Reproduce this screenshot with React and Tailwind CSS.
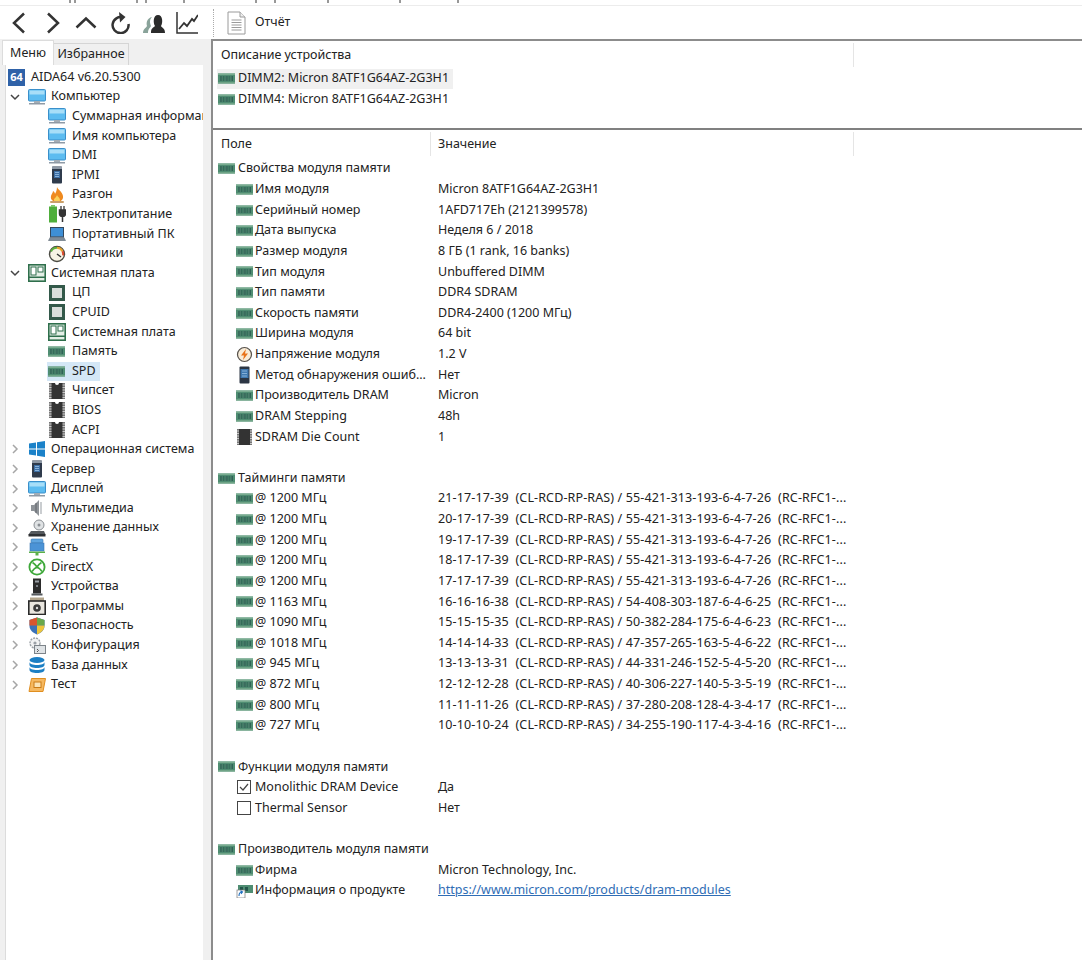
const FONT = "font-['Noto_Sans',sans-serif]";

function Ram({ className = 'w-[17px] h-[11px]' }) {
  return (
    <svg viewBox="0 0 17 11" className={className}>
      <rect x="0" y="0.5" width="17" height="10" fill="#4f8d72" />
      <rect x="0" y="0.5" width="17" height="1.5" fill="#79ab90" />
      <rect x="0" y="9" width="17" height="1.5" fill="#6fa386" />
      <rect x="2" y="3" width="3.6" height="5" fill="#23564a" />
      <rect x="6.7" y="3" width="3.6" height="5" fill="#23564a" />
      <rect x="11.4" y="3" width="3.6" height="5" fill="#23564a" />
      <path d="M3 3v5M4.400 3v5M7.700 3v5M9.100 3v5M12.400 3v5M13.800 3v5" stroke="#7fb094" strokeWidth="0.5" />
    </svg>
  );
}

function Monitor() {
  return (
    <svg viewBox="0 0 18 16" className="w-[18px] h-[16px]">
      <rect x="0.5" y="0.5" width="17" height="11.5" rx="1" fill="#5dbcf0" stroke="#3a8fca" />
      <rect x="1.5" y="1.5" width="15" height="4" fill="#a8def8" />
      <rect x="6" y="12" width="6" height="2" fill="#a3adb6" />
      <rect x="1" y="14" width="16" height="1.5" fill="#8f9aa5" />
    </svg>
  );
}

function Server() {
  return (
    <svg viewBox="0 0 18 18" className="w-[18px] h-[18px]">
      <rect x="4" y="0.5" width="10" height="17" rx="1" fill="#2f3b4c" />
      <rect x="4" y="0.5" width="10" height="2.5" fill="#8d98a5" />
      <rect x="6" y="5" width="6" height="7" fill="#3d6fa5" />
      <path d="M7 6.5h4M7 8.5h4M7 10.5h4" stroke="#9cc4e8" strokeWidth="0.8" />
    </svg>
  );
}

function Flame() {
  return (
    <svg viewBox="0 0 18 18" className="w-[18px] h-[18px]">
      <path d="M9 1c1 3 5 4 6 9 .6 4-3 6-6 6s-7-2-6-6c.4-2 2-3 2-5 1 .5 2 1.5 2 3 1-2 2-4 2-7z" fill="#ef8a1f" />
      <path d="M9 9c.5 2 3 2.5 3 5 0 1.5-1.5 2-3 2s-3-.5-3-2c0-2 2.5-2.500 3-5z" fill="#fbd15a" />
      <rect x="2" y="15" width="14" height="2" rx="1" fill="#c9a06a" />
    </svg>
  );
}

function Power() {
  return (
    <svg viewBox="0 0 18 18" className="w-[18px] h-[18px]">
      <rect x="1" y="1.5" width="8" height="16" fill="#4fae3c" />
      <rect x="3" y="0" width="4" height="2" fill="#7ec96c" />
      <path d="M13 1v4M16 1v4" stroke="#333" strokeWidth="1.3" />
      <path d="M11.500 5h6v3.500a3 3 0 0 1-6 0zM14.500 11v6" stroke="#333" strokeWidth="1.5" fill="#333" />
    </svg>
  );
}

function Laptop() {
  return (
    <svg viewBox="0 0 18 16" className="w-[18px] h-[16px]">
      <rect x="2.5" y="1.5" width="13" height="9.5" fill="#3e8fd6" stroke="#33475c" />
      <path d="M2.500 11h13l2 3.500H.5z" fill="#7d8b99" stroke="#5a6672" strokeWidth="0.6" />
    </svg>
  );
}

function Gauge() {
  return (
    <svg viewBox="0 0 18 18" className="w-[18px] h-[18px]">
      <circle cx="9" cy="9" r="7.5" fill="#f8f3e4" stroke="#4a4a42" strokeWidth="1.4" />
      <path d="M3 6.500A6.500 6.500 0 0 1 9 2.800" stroke="#5eae3e" strokeWidth="2" fill="none" />
      <path d="M9 2.800a6.500 6.500 0 0 1 5.500 3.500" stroke="#e7a52c" strokeWidth="2" fill="none" />
      <path d="M14.500 6.300a6.500 6.500 0 0 1 .6 4" stroke="#d9482c" strokeWidth="2" fill="none" />
      <path d="M9 9l4 3" stroke="#333" strokeWidth="1.4" />
    </svg>
  );
}

function Board() {
  return (
    <svg viewBox="0 0 18 18" className="w-[18px] h-[18px]">
      <rect x="0.8" y="0.8" width="16.4" height="16.4" fill="#e4efe6" stroke="#2f6f4c" strokeWidth="1.6" />
      <rect x="3" y="3" width="5" height="8" fill="#fff" stroke="#2f6f4c" />
      <rect x="10" y="3" width="5" height="5" fill="#fff" stroke="#2f6f4c" />
      <rect x="1" y="12.5" width="16" height="1.5" fill="#2f6f4c" />
    </svg>
  );
}

function Cpu() {
  return (
    <svg viewBox="0 0 18 18" className="w-[18px] h-[18px]">
      <rect x="1" y="1" width="16" height="16" fill="#33594a" />
      <rect x="4" y="4" width="10" height="10" fill="#d9dedb" />
    </svg>
  );
}

function Chip() {
  return (
    <svg viewBox="0 0 18 18" className="w-[18px] h-[18px]">
      <path d="M1 1h6a2 2 0 0 0 4 0h6v16H1z" fill="#777" />
      <rect x="3.5" y="1" width="11" height="16" fill="#333" />
      <path d="M7 1a2 2 0 0 0 4 0z" fill="#fff" />
      <path d="M1 3h16M1 5.500h16M1 8h16M1 10.500h16M1 13h16M1 15.500h16" stroke="#fff" strokeWidth="0.6" strokeDasharray="2.500 11 2.500" />
    </svg>
  );
}

function Windows() {
  return (
    <svg viewBox="0 0 18 18" className="w-[18px] h-[18px]">
      <path d="M1 3.500l7-1v6H1zM9 2.300l8-1.300v7.500H9zM1 9.500h7v6l-7-1zM9 9.500h8V17l-8-1.300z" fill="#1b82c9" />
    </svg>
  );
}

function Speaker() {
  return (
    <svg viewBox="0 0 18 18" className="w-[18px] h-[18px]">
      <path d="M3 6h3l5-5v16l-5-5H3z" fill="#8f9499" />
      <path d="M8 4v10" stroke="#60656a" />
      <path d="M13 3v12" stroke="#b9bdc1" strokeWidth="1.5" />
    </svg>
  );
}

function Storage() {
  return (
    <svg viewBox="0 0 18 18" className="w-[18px] h-[18px]">
      <circle cx="11" cy="6" r="5" fill="#dfe2e4" stroke="#8a8f94" />
      <circle cx="11" cy="6" r="1.5" fill="#8a8f94" />
      <path d="M3 12h13l1.500 3.500H.5z" fill="#55595d" />
      <rect x="0.5" y="15" width="17" height="2.5" fill="#2e3033" />
    </svg>
  );
}

function Network() {
  return (
    <svg viewBox="0 0 18 18" className="w-[18px] h-[18px]">
      <rect x="3" y="1" width="12" height="4" rx="1" fill="#5fa5e0" stroke="#3c78b4" strokeWidth="0.6" />
      <rect x="2" y="5" width="14" height="8" fill="#4b93d6" stroke="#3c78b4" strokeWidth="0.6" />
      <rect x="1" y="13.5" width="16" height="1.5" fill="#5bb04a" />
      <rect x="7.5" y="15" width="3" height="2.5" fill="#5bb04a" />
    </svg>
  );
}

function Xbox() {
  return (
    <svg viewBox="0 0 18 18" className="w-[18px] h-[18px]">
      <circle cx="9" cy="9" r="7.6" fill="#fff" stroke="#3ea83a" strokeWidth="1.8" />
      <path d="M4.500 4.500C7 6 8 7.500 9 9c1-1.500 2-3 4.500-4.500M4 13.500C5.500 11 7 10 9 9c2 1 3.500 2 5 4.500" stroke="#3ea83a" strokeWidth="1.7" fill="none" />
    </svg>
  );
}

function Device() {
  return (
    <svg viewBox="0 0 18 18" className="w-[18px] h-[18px]">
      <rect x="5" y="0.5" width="8" height="15" fill="#2b2b2b" />
      <rect x="7" y="2.5" width="4" height="2" fill="#9aa0a6" />
      <rect x="8" y="7" width="2" height="2" fill="#7b8086" />
      <rect x="3.5" y="15.5" width="11" height="2" fill="#55595d" />
    </svg>
  );
}

function Programs() {
  return (
    <svg viewBox="0 0 18 18" className="w-[18px] h-[18px]">
      <rect x="2" y="0.5" width="14" height="4" fill="#b3a58c" />
      <rect x="0.8" y="4" width="16.4" height="13.5" fill="#e9e6df" stroke="#2a2a2a" strokeWidth="1.6" />
      <circle cx="9" cy="11" r="3.8" fill="#3a3a3a" />
      <circle cx="9" cy="11" r="1.2" fill="#ddd" />
    </svg>
  );
}

function Shield() {
  return (
    <svg viewBox="0 0 18 18" className="w-[18px] h-[18px]">
      <path d="M9 .5l7.500 2.500v6c0 4-3.500 7-7.500 8.500C5 16 1.500 13 1.500 9V3z" fill="#3c72b8" />
      <path d="M9 .5v8H1.500V3z" fill="#d9562e" />
      <path d="M9 .5l7.500 2.500v5.500H9z" fill="#6aa84a" />
      <path d="M9 8.500h7.500c0 4-3.500 7.500-7.500 9z" fill="#efc53a" />
    </svg>
  );
}

function Config() {
  return (
    <svg viewBox="0 0 18 18" className="w-[18px] h-[18px]">
      <circle cx="7" cy="7" r="5" fill="#f1f2f3" stroke="#9aa0a6" strokeWidth="1.4" strokeDasharray="2 1" />
      <circle cx="7" cy="7" r="1.6" fill="#9aa0a6" />
      <rect x="6.5" y="9.5" width="11" height="8" fill="#dfe3e6" stroke="#7d848a" />
      <path d="M9 13l1.500 1.500L9 16" stroke="#555" fill="none" />
    </svg>
  );
}

function Database() {
  return (
    <svg viewBox="0 0 18 18" className="w-[18px] h-[18px]">
      <ellipse cx="9" cy="4" rx="7.5" ry="3" fill="#1c7fc4" />
      <path d="M1.500 6v3c0 1.700 3.400 3 7.500 3s7.500-1.300 7.500-3V6c0 1.700-3.400 3-7.500 3S1.500 7.700 1.500 6z" fill="#1c7fc4" />
      <path d="M1.500 11v3c0 1.700 3.400 3 7.500 3s7.500-1.300 7.500-3v-3c0 1.700-3.400 3-7.500 3s-7.500-1.300-7.500-3z" fill="#1c7fc4" />
    </svg>
  );
}

function TestIcon() {
  return (
    <svg viewBox="0 0 18 18" className="w-[18px] h-[18px]">
      <path d="M3.500 2.500h14l-2.500 13H1z" fill="#f5b860" stroke="#e08e1f" />
      <rect x="6" y="6" width="7" height="5.500" fill="#fbe3b4" stroke="#c97a14" />
    </svg>
  );
}

function Bolt() {
  return (
    <svg viewBox="0 0 17 17" className="w-[17px] h-[17px]">
      <circle cx="8.5" cy="8.5" r="7" fill="#f8ecd8" stroke="#55504a" strokeWidth="1.2" />
      <path d="M10 3L5 9.500h3L7 14l5-6.500H9z" fill="#e8731a" />
    </svg>
  );
}

function Tall() {
  return (
    <svg viewBox="0 0 17 18" className="w-[17px] h-[18px]">
      <rect x="3.5" y="0.5" width="10" height="17" rx="1" fill="#2c3644" />
      <rect x="4.5" y="3" width="8" height="9" fill="#3f78b0" />
      <path d="M6 5h5M6 7.500h5M6 10h5" stroke="#a3c8ea" strokeWidth="0.7" />
    </svg>
  );
}

function DieChip() {
  return (
    <svg viewBox="0 0 17 18" className="w-[17px] h-[18px]">
      <rect x="1" y="1" width="15" height="16" fill="#777" />
      <rect x="3" y="1" width="11" height="16" fill="#333" />
      <path d="M1 3h15M1 5.500h15M1 8h15M1 10.500h15M1 13h15M1 15.500h15" stroke="#fff" strokeWidth="0.6" strokeDasharray="2 11 2" />
    </svg>
  );
}

function Check({ on }) {
  return (
    <svg viewBox="0 0 15 15" className="w-[15px] h-[15px] ml-[1px]">
      <rect x="0.5" y="0.5" width="13" height="13" fill="#fff" stroke="#444" />
      {on && <path d="M3 7l3 3 5-6" fill="none" stroke="#444" strokeWidth="1.2" />}
    </svg>
  );
}

function LinkIcon() {
  return (
    <svg viewBox="0 0 17 14" className="w-[17px] h-[14px]">
      <rect x="2" y="1" width="15" height="8" fill="#4f8d72" />
      <rect x="4" y="3" width="3" height="4" fill="#23564a" />
      <rect x="9" y="3" width="3" height="4" fill="#23564a" />
      <rect x="1" y="6" width="8" height="8" fill="#fff" stroke="#777" strokeWidth="0.7" />
      <path d="M3 12c0-3 1-4 3-4M4.500 6.800L6.500 8 5 9.800" fill="none" stroke="#1f6fc0" strokeWidth="1.1" />
    </svg>
  );
}

function Chevron({ open }) {
  return (
    <svg viewBox="0 0 10 10" className="w-[10px] h-[10px]">
      {open
        ? <path d="M1 3l4 4 4-4" fill="none" stroke="#444" strokeWidth="1.5" />
        : <path d="M3 1l4 4-4 4" fill="none" stroke="#a6a6a6" strokeWidth="1.5" />}
    </svg>
  );
}

const TREE = [
  { open: true, icon: Monitor, label: 'Компьютер', kids: [
    [Monitor, 'Суммарная информация'], [Monitor, 'Имя компьютера'], [Monitor, 'DMI'], [Server, 'IPMI'],
    [Flame, 'Разгон'], [Power, 'Электропитание'], [Laptop, 'Портативный ПК'], [Gauge, 'Датчики'],
  ] },
  { open: true, icon: Board, label: 'Системная плата', kids: [
    [Cpu, 'ЦП'], [Cpu, 'CPUID'], [Board, 'Системная плата'], [Ram, 'Память'], [Ram, 'SPD'],
    [Chip, 'Чипсет'], [Chip, 'BIOS'], [Chip, 'ACPI'],
  ] },
  { icon: Windows, label: 'Операционная система' },
  { icon: Server, label: 'Сервер' },
  { icon: Monitor, label: 'Дисплей' },
  { icon: Speaker, label: 'Мультимедиа' },
  { icon: Storage, label: 'Хранение данных' },
  { icon: Network, label: 'Сеть' },
  { icon: Xbox, label: 'DirectX' },
  { icon: Device, label: 'Устройства' },
  { icon: Programs, label: 'Программы' },
  { icon: Shield, label: 'Безопасность' },
  { icon: Config, label: 'Конфигурация' },
  { icon: Database, label: 'База данных' },
  { icon: TestIcon, label: 'Тест' },
];

function TreeNode({ node }) {
  const Icon = node.icon;
  return (
    <>
      <div className="flex items-center h-[19.6px]">
        <span className="w-[22px] shrink-0 flex justify-start pl-[4px]"><Chevron open={node.open} /></span>
        <span className="w-[23px] shrink-0 flex justify-start"><Icon /></span>
        <span className="whitespace-nowrap">{node.label}</span>
      </div>
      {node.kids && node.kids.map(([KidIcon, label]) => (
        <div key={label} className="flex items-center h-[19.6px] pl-[41px]">
          <div className={`flex items-center h-[19px] pl-[1px] pr-[4px] ${label === 'SPD' ? 'bg-[#d4e7f6]' : ''}`}>
            <span className="w-[24px] shrink-0 flex justify-start"><KidIcon /></span>
            <span className="whitespace-nowrap">{label}</span>
          </div>
        </div>
      ))}
    </>
  );
}

const sameRam = (label, value) => ({ icon: Ram, label, value });
const timing = (label, value) => ({ icon: Ram, label, value, timing: true });

const ROWS = [
  { section: 'Свойства модуля памяти' },
  sameRam('Имя модуля', 'Micron 8ATF1G64AZ-2G3H1'),
  sameRam('Серийный номер', '1AFD717Eh (2121399578)'),
  sameRam('Дата выпуска', 'Неделя 6 / 2018'),
  sameRam('Размер модуля', '8 ГБ (1 rank, 16 banks)'),
  sameRam('Тип модуля', 'Unbuffered DIMM'),
  sameRam('Тип памяти', 'DDR4 SDRAM'),
  sameRam('Скорость памяти', 'DDR4-2400 (1200 МГц)'),
  sameRam('Ширина модуля', '64 bit'),
  { icon: Bolt, label: 'Напряжение модуля', value: '1.2 V' },
  { icon: Tall, label: 'Метод обнаружения ошиб...', value: 'Нет' },
  sameRam('Производитель DRAM', 'Micron'),
  sameRam('DRAM Stepping', '48h'),
  { icon: DieChip, label: 'SDRAM Die Count', value: '1' },
  {},
  { section: 'Тайминги памяти' },
  timing('@ 1200 МГц', '21-17-17-39  (CL-RCD-RP-RAS) / 55-421-313-193-6-4-7-26  (RC-RFC1-...'),
  timing('@ 1200 МГц', '20-17-17-39  (CL-RCD-RP-RAS) / 55-421-313-193-6-4-7-26  (RC-RFC1-...'),
  timing('@ 1200 МГц', '19-17-17-39  (CL-RCD-RP-RAS) / 55-421-313-193-6-4-7-26  (RC-RFC1-...'),
  timing('@ 1200 МГц', '18-17-17-39  (CL-RCD-RP-RAS) / 55-421-313-193-6-4-7-26  (RC-RFC1-...'),
  timing('@ 1200 МГц', '17-17-17-39  (CL-RCD-RP-RAS) / 55-421-313-193-6-4-7-26  (RC-RFC1-...'),
  timing('@ 1163 МГц', '16-16-16-38  (CL-RCD-RP-RAS) / 54-408-303-187-6-4-6-25  (RC-RFC1-...'),
  timing('@ 1090 МГц', '15-15-15-35  (CL-RCD-RP-RAS) / 50-382-284-175-6-4-6-23  (RC-RFC1-...'),
  timing('@ 1018 МГц', '14-14-14-33  (CL-RCD-RP-RAS) / 47-357-265-163-5-4-6-22  (RC-RFC1-...'),
  timing('@ 945 МГц', '13-13-13-31  (CL-RCD-RP-RAS) / 44-331-246-152-5-4-5-20  (RC-RFC1-...'),
  timing('@ 872 МГц', '12-12-12-28  (CL-RCD-RP-RAS) / 40-306-227-140-5-3-5-19  (RC-RFC1-...'),
  timing('@ 800 МГц', '11-11-11-26  (CL-RCD-RP-RAS) / 37-280-208-128-4-3-4-17  (RC-RFC1-...'),
  timing('@ 727 МГц', '10-10-10-24  (CL-RCD-RP-RAS) / 34-255-190-117-4-3-4-16  (RC-RFC1-...'),
  {},
  { section: 'Функции модуля памяти' },
  { check: true, label: 'Monolithic DRAM Device', value: 'Да' },
  { check: false, label: 'Thermal Sensor', value: 'Нет' },
  {},
  { section: 'Производитель модуля памяти' },
  sameRam('Фирма', 'Micron Technology, Inc.'),
  { icon: LinkIcon, label: 'Информация о продукте', link: 'https://www.micron.com/products/dram-modules' },
];

function Row({ row }) {
  if (row.section) {
    return (
      <div className="flex items-center h-[20.63px] pl-[5px]">
        <span className="w-[20px] flex"><Ram /></span>
        <span className="whitespace-nowrap">{row.section}</span>
      </div>
    );
  }
  if (!row.label) return <div className="h-[20.63px]" />;
  const Icon = row.icon;
  return (
    <div className="flex items-center h-[20.63px]">
      <div className="flex items-center w-[225px] pl-[23px] shrink-0">
        <span className="w-[19px] flex shrink-0">
          {Icon ? <Icon /> : <Check on={row.check} />}
        </span>
        <span className="whitespace-nowrap">{row.label}</span>
      </div>
      {row.link
        ? <a className="text-[#2f6db5] underline whitespace-nowrap">{row.link}</a>
        : <span className={`whitespace-pre ${row.timing ? 'tracking-[0.13px]' : ''}`}>{row.value}</span>}
    </div>
  );
}

export default function App() {
  return (
    <div className={`${FONT} w-[1082px] h-[960px] overflow-hidden bg-white text-[12.5px] text-[#222] flex flex-col`}>
      {/* leftover of the window above, cut off by the crop */}
      <div className="h-[6px] border-b border-[#ececec] shrink-0">
        <svg width="540" height="4" className="block">
          <path d="M70 0v3M75 0v3M137 0v3M146 0v3M184 0v3M256 0v3M275 0v3M328 0v3M400 0v3M458 0v3" stroke="#333" strokeWidth="1" />
        </svg>
      </div>

      {/* toolbar */}
      <div className="h-[33px] flex items-center shrink-0">
        <div className="flex items-center w-[213px] pl-[8px] gap-[11.7px]">
          <svg viewBox="0 0 22 22" className="w-[22px] h-[22px]"><path d="M16 1.500L6 11l10 9.500" fill="none" stroke="#333" strokeWidth="2.5" /></svg>
          <svg viewBox="0 0 22 22" className="w-[22px] h-[22px]"><path d="M6 1.500L16 11 6 20.500" fill="none" stroke="#333" strokeWidth="2.5" /></svg>
          <svg viewBox="0 0 22 22" className="w-[22px] h-[22px]"><path d="M1.500 15.500L11 6.500l9.500 9" fill="none" stroke="#333" strokeWidth="2.5" /></svg>
          <svg viewBox="0 0 22 22" className="w-[22px] h-[22px]"><path d="M14 5.500A8 8 0 1 0 19.500 12" fill="none" stroke="#333" strokeWidth="2.5" /><path d="M10 0l6.500 5L11 10.500z" fill="#333" /></svg>
          <svg viewBox="0 0 22 22" className="w-[22px] h-[22px]">
            <path d="M8 21c0-5 2-5 4-7-2-3-2-11 3-11s5 8 3 11c1 2 4 2 4 7z" fill="#2b2b2b" />
            <path d="M0 21c0-4 3-5 4-7-1-3 0-8 5-9-3 3-2 6-1 9-1 2-3 3-3 7z" fill="#8aa39a" />
          </svg>
          <svg viewBox="0 0 22 22" className="w-[22px] h-[22px]">
            <path d="M1 0v21h21" fill="none" stroke="#333" strokeWidth="1.5" />
            <path d="M3 17l5-6 3 3 5-7 2 2 4-6" fill="none" stroke="#333" strokeWidth="1.8" />
          </svg>
        </div>
        <div className="h-[28px] border-l border-dotted border-[#aaa]" />
        <svg viewBox="0 0 20 24" className="w-[20px] h-[24px] ml-[13px]">
          <path d="M1 1h12l5 5v17H1z" fill="#fff" stroke="#9a9a9a" />
          <path d="M13 1v5h5" fill="#eee" stroke="#9a9a9a" />
          <path d="M4.500 9h10M4.500 11.500h10M4.500 14h10M4.500 16.500h10M4.500 19h10" stroke="#9a9a9a" />
        </svg>
        <span className="ml-[8px]">Отчёт</span>
      </div>

      <div className="flex flex-1 min-h-0">
        {/* left: tabs and tree */}
        <div className="w-[211px] shrink-0 bg-[#f0f0f0] flex flex-col pl-[1px]">
          <div className="flex items-end h-[26px] pl-[1px] shrink-0">
            <div className="w-[52px] h-[25px] bg-white flex items-center justify-center border-t border-x border-[#dcdcdc]">Меню</div>
            <div className="w-[75px] h-[22px] flex items-center justify-center border-t border-r border-[#d5d5d5]">Избранное</div>
          </div>
          <div className="flex-1 ml-[4px] mr-[8px] bg-white border-l border-[#dcdcdc] overflow-hidden pt-[2.4px]">
            <div className="flex items-center h-[19.6px] pl-[2px]">
              <span className="w-[23px] flex">
                <span className="w-[17px] h-[17px] bg-[#2f62a8] text-white text-[11px] font-bold flex items-center justify-center">64</span>
              </span>
              <span className="whitespace-nowrap">AIDA64 v6.20.5300</span>
            </div>
            {TREE.map((node) => <TreeNode key={node.label} node={node} />)}
          </div>
        </div>

        {/* right: device list and details */}
        <div className="flex-1 min-w-0 border-l-2 border-t-2 border-[#8c8c8c] flex flex-col overflow-hidden">
          <div className="h-[89px] shrink-0 border-b-2 border-[#808080]">
            <div className="flex items-center h-[27px] pt-[1px]">
              <div className="w-[641px] h-[24px] pl-[8px] flex items-center border-r border-[#e5e5e5]">Описание устройства</div>
            </div>
            <div className="flex items-center h-[21px]">
              <div className="flex items-center h-[20px] ml-[4px] pl-[1px] pr-[4px] bg-[#f0f0f0]">
                <span className="w-[20px] flex"><Ram /></span>DIMM2: Micron 8ATF1G64AZ-2G3H1
              </div>
            </div>
            <div className="flex items-center h-[21px] pl-[5px]">
              <span className="w-[20px] flex"><Ram /></span>DIMM4: Micron 8ATF1G64AZ-2G3H1
            </div>
          </div>
          <div className="flex h-[28.5px] items-center">
            <div className="w-[218px] pl-[8px] h-[24px] flex items-center border-r border-[#e5e5e5]">Поле</div>
            <div className="w-[423px] h-[24px] pl-[7px] flex items-center border-r border-[#e5e5e5]">Значение</div>
          </div>
          <div>
            {ROWS.map((row, i) => <Row key={i} row={row} />)}
          </div>
        </div>
      </div>
    </div>
  );
}
